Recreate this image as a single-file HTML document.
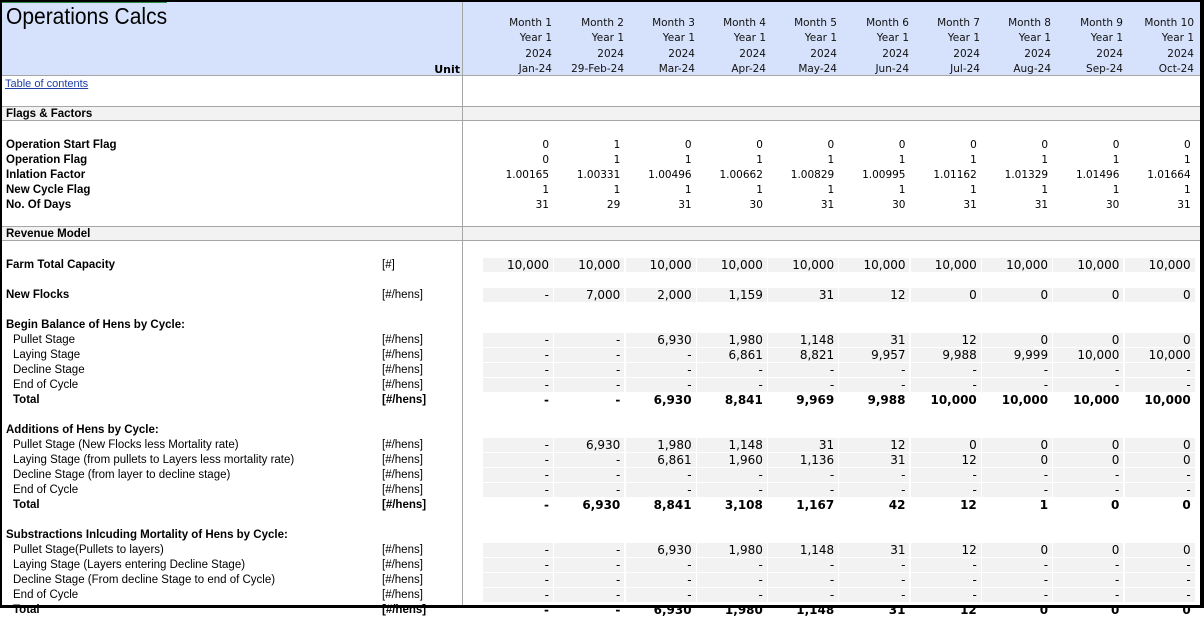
<!DOCTYPE html>
<html><head><meta charset="utf-8"><style>
*{margin:0;padding:0;box-sizing:border-box}
body{width:1204px;height:608px;overflow:hidden;background:#fff;font-family:"DejaVu Sans","Liberation Sans",sans-serif;position:relative}
.frame{position:absolute;left:0;top:0;width:1204px;height:608px;border:2px solid #000;border-bottom:3px solid #000;border-right:4px solid #000;z-index:10;pointer-events:none}
.hdr{position:absolute;left:2px;top:2px;width:1198px;height:74px;background:#d6e2fb;border-bottom:1px solid #a6a6a6}
.vline{position:absolute;left:462px;top:2px;width:1px;height:606px;background:#a6a6a6;z-index:5}
.title{position:absolute;left:6px;top:4px;font:21px "Liberation Sans",sans-serif;color:#000;transform:scaleY(1.12);transform-origin:top left}
.unith{position:absolute;left:400px;width:60px;text-align:right;top:62px;font:bold 11px "DejaVu Sans",sans-serif;line-height:15px}
.hc{position:absolute;top:16px;font-size:10.5px;line-height:15.3px;text-align:right;width:70px;color:#111}
.band{position:absolute;left:2px;width:1198px;height:15px;background:#f2f2f2;border-top:1px solid #a6a6a6;border-bottom:1px solid #a6a6a6}
.r{position:absolute;left:0;width:1200px;height:15px;line-height:15px;font-size:10.5px}
.l{position:absolute;left:6px;font-weight:bold;font-size:11.5px;font-family:"Liberation Sans",sans-serif}
.s{position:absolute;left:13px;font-family:"Liberation Sans Narrow","Liberation Sans",sans-serif;font-size:11.5px}
.st{font-weight:bold}
.u{position:absolute;left:382px;font-family:"Liberation Sans Narrow","Liberation Sans",sans-serif;font-size:11.5px}
.cs{position:absolute;left:483px;top:0;display:flex}
.cs span{width:70px;margin-right:1.3px;height:14px;text-align:right;padding-right:4px;background:#f2f2f2;font-size:11px;line-height:14px}
.cs.b span{background:none;font-weight:bold}
.cs.n span{background:none;font-size:10.5px}
.cs.big span{font-size:12px}
a{color:#1f3fa8;text-decoration:underline}
</style></head><body>
<div class="hdr"></div>
<div style="position:absolute;left:2px;top:2px;width:165px;height:1px;background:#2a8a4a"></div>
<div class="vline"></div>
<div class="title">Operations Calcs</div>
<div class="unith">Unit</div>
<div class="hc" style="left:482px">Month 1<br>Year 1<br>2024<br>Jan-24</div>
<div class="hc" style="left:554px">Month 2<br>Year 1<br>2024<br>29-Feb-24</div>
<div class="hc" style="left:625px">Month 3<br>Year 1<br>2024<br>Mar-24</div>
<div class="hc" style="left:696px">Month 4<br>Year 1<br>2024<br>Apr-24</div>
<div class="hc" style="left:767px">Month 5<br>Year 1<br>2024<br>May-24</div>
<div class="hc" style="left:839px">Month 6<br>Year 1<br>2024<br>Jun-24</div>
<div class="hc" style="left:910px">Month 7<br>Year 1<br>2024<br>Jul-24</div>
<div class="hc" style="left:981px">Month 8<br>Year 1<br>2024<br>Aug-24</div>
<div class="hc" style="left:1053px">Month 9<br>Year 1<br>2024<br>Sep-24</div>
<div class="hc" style="left:1124px">Month 10<br>Year 1<br>2024<br>Oct-24</div>

<div class="r" style="top:77px"><a class="s" style="left:5px;font-family:'Liberation Sans',sans-serif;font-size:11px">Table of contents</a></div>

<div class="band" style="top:106px"></div>
<div class="r" style="top:107px"><span class="l">Flags &amp; Factors</span></div>

<div class="r" style="top:138px"><span class="l">Operation Start Flag</span><div class="cs n"><span>0</span><span>1</span><span>0</span><span>0</span><span>0</span><span>0</span><span>0</span><span>0</span><span>0</span><span>0</span></div></div>
<div class="r" style="top:153px"><span class="l">Operation Flag</span><div class="cs n"><span>0</span><span>1</span><span>1</span><span>1</span><span>1</span><span>1</span><span>1</span><span>1</span><span>1</span><span>1</span></div></div>
<div class="r" style="top:168px"><span class="l">Inlation Factor</span><div class="cs n"><span>1.00165</span><span>1.00331</span><span>1.00496</span><span>1.00662</span><span>1.00829</span><span>1.00995</span><span>1.01162</span><span>1.01329</span><span>1.01496</span><span>1.01664</span></div></div>
<div class="r" style="top:183px"><span class="l">New Cycle Flag</span><div class="cs n"><span>1</span><span>1</span><span>1</span><span>1</span><span>1</span><span>1</span><span>1</span><span>1</span><span>1</span><span>1</span></div></div>
<div class="r" style="top:198px"><span class="l">No. Of Days</span><div class="cs n"><span>31</span><span>29</span><span>31</span><span>30</span><span>31</span><span>30</span><span>31</span><span>31</span><span>30</span><span>31</span></div></div>

<div class="band" style="top:226px"></div>
<div class="r" style="top:227px"><span class="l">Revenue Model</span></div>

<div class="r" style="top:258px"><span class="l">Farm Total Capacity</span><span class="u">[#]</span><div class="cs big"><span>10,000</span><span>10,000</span><span>10,000</span><span>10,000</span><span>10,000</span><span>10,000</span><span>10,000</span><span>10,000</span><span>10,000</span><span>10,000</span></div></div>
<div class="r" style="top:288px"><span class="l">New Flocks</span><span class="u">[#/hens]</span><div class="cs big"><span>-</span><span>7,000</span><span>2,000</span><span>1,159</span><span>31</span><span>12</span><span>0</span><span>0</span><span>0</span><span>0</span></div></div>

<div class="r" style="top:318px"><span class="l">Begin Balance of Hens by Cycle:</span></div>
<div class="r" style="top:333px"><span class="s">Pullet Stage</span><span class="u">[#/hens]</span><div class="cs big"><span>-</span><span>-</span><span>6,930</span><span>1,980</span><span>1,148</span><span>31</span><span>12</span><span>0</span><span>0</span><span>0</span></div></div>
<div class="r" style="top:348px"><span class="s">Laying Stage</span><span class="u">[#/hens]</span><div class="cs big"><span>-</span><span>-</span><span>-</span><span>6,861</span><span>8,821</span><span>9,957</span><span>9,988</span><span>9,999</span><span>10,000</span><span>10,000</span></div></div>
<div class="r" style="top:363px"><span class="s">Decline Stage</span><span class="u">[#/hens]</span><div class="cs big"><span>-</span><span>-</span><span>-</span><span>-</span><span>-</span><span>-</span><span>-</span><span>-</span><span>-</span><span>-</span></div></div>
<div class="r" style="top:378px"><span class="s">End of Cycle</span><span class="u">[#/hens]</span><div class="cs big"><span>-</span><span>-</span><span>-</span><span>-</span><span>-</span><span>-</span><span>-</span><span>-</span><span>-</span><span>-</span></div></div>
<div class="r" style="top:393px"><span class="s st">Total</span><span class="u st">[#/hens]</span><div class="cs b big"><span>-</span><span>-</span><span>6,930</span><span>8,841</span><span>9,969</span><span>9,988</span><span>10,000</span><span>10,000</span><span>10,000</span><span>10,000</span></div></div>

<div class="r" style="top:423px"><span class="l">Additions of Hens by Cycle:</span></div>
<div class="r" style="top:438px"><span class="s">Pullet Stage (New Flocks less Mortality rate)</span><span class="u">[#/hens]</span><div class="cs big"><span>-</span><span>6,930</span><span>1,980</span><span>1,148</span><span>31</span><span>12</span><span>0</span><span>0</span><span>0</span><span>0</span></div></div>
<div class="r" style="top:453px"><span class="s">Laying Stage (from pullets to Layers less mortality rate)</span><span class="u">[#/hens]</span><div class="cs big"><span>-</span><span>-</span><span>6,861</span><span>1,960</span><span>1,136</span><span>31</span><span>12</span><span>0</span><span>0</span><span>0</span></div></div>
<div class="r" style="top:468px"><span class="s">Decline Stage (from layer to decline stage)</span><span class="u">[#/hens]</span><div class="cs big"><span>-</span><span>-</span><span>-</span><span>-</span><span>-</span><span>-</span><span>-</span><span>-</span><span>-</span><span>-</span></div></div>
<div class="r" style="top:483px"><span class="s">End of Cycle</span><span class="u">[#/hens]</span><div class="cs big"><span>-</span><span>-</span><span>-</span><span>-</span><span>-</span><span>-</span><span>-</span><span>-</span><span>-</span><span>-</span></div></div>
<div class="r" style="top:498px"><span class="s st">Total</span><span class="u st">[#/hens]</span><div class="cs b big"><span>-</span><span>6,930</span><span>8,841</span><span>3,108</span><span>1,167</span><span>42</span><span>12</span><span>1</span><span>0</span><span>0</span></div></div>

<div class="r" style="top:528px"><span class="l">Substractions Inlcuding Mortality of Hens by Cycle:</span></div>
<div class="r" style="top:543px"><span class="s">Pullet Stage(Pullets to layers)</span><span class="u">[#/hens]</span><div class="cs big"><span>-</span><span>-</span><span>6,930</span><span>1,980</span><span>1,148</span><span>31</span><span>12</span><span>0</span><span>0</span><span>0</span></div></div>
<div class="r" style="top:558px"><span class="s">Laying Stage (Layers entering Decline Stage)</span><span class="u">[#/hens]</span><div class="cs big"><span>-</span><span>-</span><span>-</span><span>-</span><span>-</span><span>-</span><span>-</span><span>-</span><span>-</span><span>-</span></div></div>
<div class="r" style="top:573px"><span class="s">Decline Stage (From decline Stage to end of Cycle)</span><span class="u">[#/hens]</span><div class="cs big"><span>-</span><span>-</span><span>-</span><span>-</span><span>-</span><span>-</span><span>-</span><span>-</span><span>-</span><span>-</span></div></div>
<div class="r" style="top:588px"><span class="s">End of Cycle</span><span class="u">[#/hens]</span><div class="cs big"><span>-</span><span>-</span><span>-</span><span>-</span><span>-</span><span>-</span><span>-</span><span>-</span><span>-</span><span>-</span></div></div>
<div class="r" style="top:603px"><span class="s st">Total</span><span class="u st">[#/hens]</span><div class="cs b big"><span>-</span><span>-</span><span>6,930</span><span>1,980</span><span>1,148</span><span>31</span><span>12</span><span>0</span><span>0</span><span>0</span></div></div>
<div class="frame"></div>
</body></html>
